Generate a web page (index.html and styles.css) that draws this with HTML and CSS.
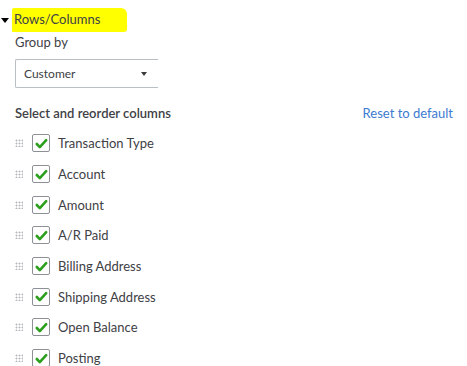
FILE: index.html
```html
<!DOCTYPE html>
<html lang="en">
<head>
    <meta charset="UTF-8">
    <title>Rows/Columns</title>
    <link rel="stylesheet" href="styles.css">
</head>
<body>
    <div class="panel">
        <div class="section-head">
            <span class="caret"></span>
            <span class="marker">Rows/Columns</span>
        </div>

        <div class="group">
            <div class="field-label">Group by</div>
            <div class="select">
                <span>Customer</span>
                <span class="select-arrow"></span>
            </div>
        </div>

        <div class="cols-head">
            <span class="cols-title">Select and reorder columns</span>
            <a class="reset" href="#">Reset to default</a>
        </div>

        <ul class="cols">
            <li><span class="grip"></span><span class="check"><svg viewBox="0 0 16 16"><path d="M3 8.5l3.2 3.3L13 4.5"/></svg></span>Transaction Type</li>
            <li><span class="grip"></span><span class="check"><svg viewBox="0 0 16 16"><path d="M3 8.5l3.2 3.3L13 4.5"/></svg></span>Account</li>
            <li><span class="grip"></span><span class="check"><svg viewBox="0 0 16 16"><path d="M3 8.5l3.2 3.3L13 4.5"/></svg></span>Amount</li>
            <li><span class="grip"></span><span class="check"><svg viewBox="0 0 16 16"><path d="M3 8.5l3.2 3.3L13 4.5"/></svg></span>A/R Paid</li>
            <li><span class="grip"></span><span class="check"><svg viewBox="0 0 16 16"><path d="M3 8.5l3.2 3.3L13 4.5"/></svg></span>Billing Address</li>
            <li><span class="grip"></span><span class="check"><svg viewBox="0 0 16 16"><path d="M3 8.5l3.2 3.3L13 4.5"/></svg></span>Shipping Address</li>
            <li><span class="grip"></span><span class="check"><svg viewBox="0 0 16 16"><path d="M3 8.5l3.2 3.3L13 4.5"/></svg></span>Open Balance</li>
            <li><span class="grip"></span><span class="check"><svg viewBox="0 0 16 16"><path d="M3 8.5l3.2 3.3L13 4.5"/></svg></span>Posting</li>
        </ul>
    </div>
</body>
</html>
```

FILE: styles.css
```css
body {
    margin: 0;
    background: #fff;
    font-family: "Lato", "Open Sans", sans-serif;
    font-size: 13px;
    color: #404145;
    overflow: hidden;
}

.panel {
    padding: 9px 14px 0 1px;
}

.section-head {
    display: flex;
    align-items: center;
    height: 22px;
}
.caret {
    width: 0;
    height: 0;
    border-left: 4px solid transparent;
    border-right: 4px solid transparent;
    border-top: 5px solid #000;
    margin-right: 3px;
}
.marker {
    background: #ffff00;
    padding: 3px 27px 5px 2px;
    border-radius: 2px 6px 3px 1px;
}

.group {
    padding-left: 14px;
}
.field-label {
    margin-top: 3px;
    line-height: 16px;
}
.select {
    margin-top: 9px;
    width: 143px;
    height: 29px;
    border: 1px solid #babec5;
    border-right: none;
    border-radius: 2px 0 0 2px;
    display: flex;
    align-items: center;
    justify-content: space-between;
    padding-left: 8px;
    box-sizing: border-box;
    font-size: 12px;
    padding-right: 11px;
}
.select-arrow {
    width: 0;
    height: 0;
    border-left: 3px solid transparent;
    border-right: 3px solid transparent;
    border-top: 4px solid #393a3d;
}

.cols-head {
    display: flex;
    justify-content: space-between;
    align-items: center;
    margin-top: 16px;
    padding-left: 14px;
    height: 18px;
}
.cols-title {
    font-weight: 600;
}
.reset {
    color: #3b7bd1;
    text-decoration: none;
}

.cols {
    list-style: none;
    margin: 6px 0 0;
    padding: 0 0 0 14px;
}
.cols li {
    display: flex;
    align-items: center;
    height: 30.7px;
}
.grip {
    width: 8px;
    height: 8px;
    margin-right: 9px;
    background-image: radial-gradient(circle, #b6b9be 0.9px, transparent 1.1px);
    background-size: 3px 3px;
}
.check {
    width: 18px;
    height: 18px;
    border: 1px solid #8d9096;
    border-radius: 2px;
    box-sizing: border-box;
    display: flex;
    align-items: center;
    justify-content: center;
    margin-right: 8px;
}
.check svg {
    width: 15px;
    height: 15px;
    fill: none;
    stroke: #2ca01c;
    stroke-width: 2.8;
    stroke-linecap: round;
    stroke-linejoin: round;
}
```
